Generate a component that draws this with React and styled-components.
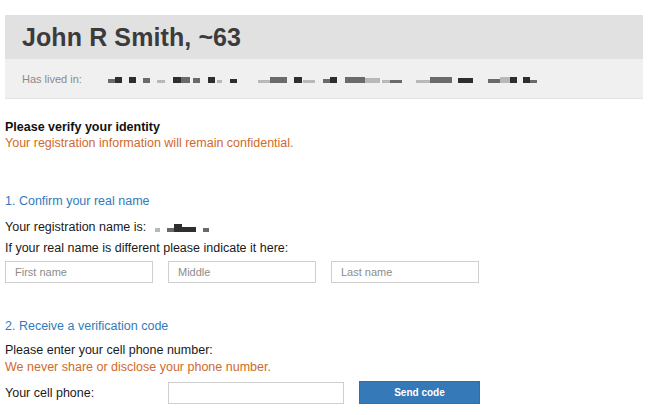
import React from 'react'
import styled, { createGlobalStyle } from 'styled-components'

const GlobalStyle = createGlobalStyle`
  html, body {
    margin: 0;
    padding: 0;
    background: #fff;
  }
  body {
    font-family: "Liberation Sans", Arial, Helvetica, sans-serif;
    color: #1a1a1a;
  }
`;

// blurred address pieces: [from x, to x, shade, height]
const livedSpans = [
  [108, 115, 1, 4], [115, 122, 2, 6], [129, 136, 2, 6], [143, 150, 1, 5], [157, 165, 0, 3],
  [173, 181, 2, 6], [181, 190, 1, 6], [193, 200, 1, 5], [208, 215, 2, 6], [217, 222, 0, 3],
  [230, 237, 2, 4], [258, 270, 0, 3], [270, 287, 1, 6], [294, 302, 2, 6], [303, 315, 0, 3],
  [323, 330, 1, 4], [330, 337, 2, 6], [345, 365, 1, 6], [365, 380, 0, 5], [382, 390, 0, 3],
  [390, 402, 1, 3], [416, 430, 0, 3], [430, 452, 1, 6], [458, 473, 2, 5], [488, 500, 1, 4],
  [500, 510, 0, 6], [510, 517, 2, 6], [523, 530, 2, 6], [530, 537, 1, 3]
];

const nameSpans = [
  [164, 169, 0, 4], [176, 183, 1, 4], [183, 191, 2, 8], [191, 205, 2, 5], [212, 218, 1, 4]
];

const toPieces = (spans, origin) => {
  let x = origin
  return spans.map(([a, b, shade, h]) => {
    const piece = { gap: a - x, w: b - a, shade, h }
    x = b
    return piece
  })
}

export default function App() {
  return (
    <Page>
      <GlobalStyle />
      <Profile>
        <NameBar>John R Smith, ~63</NameBar>
        <LivedBar>
          <LivedLabel>Has lived in:</LivedLabel>
          <Redacted>
            {toPieces(livedSpans, 107).map((p, i) => (
              <Block key={i} $shade={p.shade} style={{ width: p.w, height: p.h, marginLeft: p.gap }} />
            ))}
          </Redacted>
        </LivedBar>
      </Profile>

      <Content>
        <Intro>
          <Strong>Please verify your identity</Strong>
          <Note>Your registration information will remain confidential.</Note>
        </Intro>

        <Section>
          <SectionTitle>1. Confirm your real name</SectionTitle>
          <Line>
            Your registration name is:
            <Redacted>
              {toPieces(nameSpans, 155).map((p, i) => (
                <Block key={i} $shade={p.shade} style={{ width: p.w, height: p.h, marginLeft: p.gap }} />
              ))}
            </Redacted>
          </Line>
          <Line>If your real name is different please indicate it here:</Line>
          <InputRow>
            <TextInput placeholder="First name" />
            <TextInput placeholder="Middle" />
            <TextInput placeholder="Last name" />
          </InputRow>
        </Section>

        <Section $second>
          <SectionTitle>2. Receive a verification code</SectionTitle>
          <Line $tight>Please enter your cell phone number:</Line>
          <Note $spaced>We never share or disclose your phone number.</Note>
          <PhoneRow>
            <PhoneLabel>Your cell phone:</PhoneLabel>
            <TextInput $wide />
            <SendButton>Send code</SendButton>
          </PhoneRow>
        </Section>
      </Content>
    </Page>
  )
}

const Page = styled.div`
  width: 650px;
  height: 415px;
  overflow: hidden;
  padding-top: 15px;
  box-sizing: border-box;
`;

const Profile = styled.div`
  margin: 0 7px 0 5px;
  border-bottom: 1px solid #e3e3e3;
`;

const NameBar = styled.div`
  height: 44px;
  background: #e1e1e1;
  padding-left: 17px;
  display: flex;
  align-items: center;
  font-size: 25px;
  font-weight: bold;
  color: #3b3b3b;
  letter-spacing: 0.1px;
`;

const LivedBar = styled.div`
  height: 39px;
  background: #f0f0f0;
  padding-left: 17px;
  display: flex;
  align-items: center;
`;

const LivedLabel = styled.span`
  font-size: 11px;
  color: #8a8a8a;
  width: 85px;
`;

const Redacted = styled.span`
  display: inline-flex;
  align-items: flex-end;
  height: 9px;
  filter: blur(0.7px);
`;

const shades = ['#b8b8b8', '#6a6a6a', '#2e2e2e'];

const Block = styled.span`
  display: inline-block;
  flex-shrink: 0;
  background: ${p => shades[p.$shade]};
`;

const Content = styled.div`
  padding: 20px 0 0 5px;
  font-size: 12.5px;
`;

const Intro = styled.div`
  display: flex;
  flex-direction: column;
  line-height: 16px;
`;

const Strong = styled.div`
  font-weight: bold;
  font-size: 12.5px;
  color: #111;
`;

const Note = styled.div`
  color: #d06a2c;
  line-height: 16px;
  margin-top: ${p => (p.$spaced ? '1px' : '0')};
`;

const Section = styled.div`
  margin-top: ${p => (p.$second ? '35px' : '42px')};
`;

const SectionTitle = styled.div`
  color: #2f7cbd;
  line-height: 16px;
  margin-bottom: 8px;
`;

const Line = styled.div`
  line-height: ${p => (p.$tight ? '16px' : '21px')};
  color: #1a1a1a;
  display: flex;
  align-items: center;
`;

const InputRow = styled.div`
  display: flex;
  gap: 15px;
  margin-top: 2px;
`;

const TextInput = styled.input`
  box-sizing: border-box;
  width: ${p => (p.$wide ? '176px' : '148px')};
  height: 22px;
  border: 1px solid #cfcfcf;
  padding: 0 9px;
  font-family: "Liberation Sans", Arial, sans-serif;
  font-size: 11px;
  color: #333;
  background: #fff;
  outline: none;
  &::placeholder {
    color: #8c8c8c;
  }
`;

const PhoneRow = styled.div`
  display: flex;
  align-items: center;
  margin-top: 6px;
`;

const PhoneLabel = styled.span`
  width: 163px;
`;

const SendButton = styled.button`
  box-sizing: border-box;
  width: 121px;
  height: 23px;
  margin-left: 15px;
  border: 1px solid #2f6ea8;
  background: #3579b8;
  color: #fff;
  font-family: "Liberation Sans", Arial, sans-serif;
  font-size: 10px;
  font-weight: bold;
  cursor: pointer;
`;
